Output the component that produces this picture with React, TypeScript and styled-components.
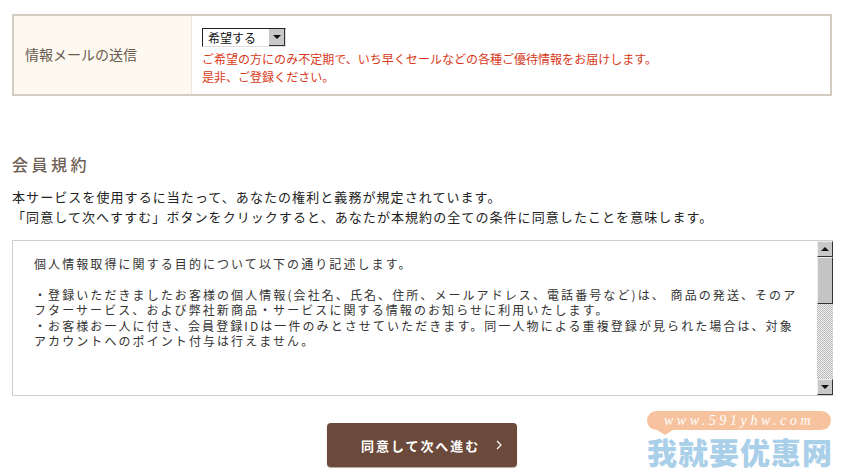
import styled, { createGlobalStyle } from 'styled-components'

const GlobalStyle = createGlobalStyle`
    html, body {
        margin: 0;
        padding: 0;
        background: #fff;
        overflow: hidden;
    }
    body {
        font-family: "Noto Sans CJK JP", "Liberation Sans", sans-serif;
    }
`

const termsLines = [
    '個人情報取得に関する目的について以下の通り記述します。',
    '',
    '・登録いただきましたお客様の個人情報(会社名、氏名、住所、メールアドレス、電話番号など)は、 商品の発送、そのア',
    'フターサービス、および弊社新商品・サービスに関する情報のお知らせに利用いたします。',
    '・お客様お一人に付き、会員登録IDは一件のみとさせていただきます。同一人物による重複登録が見られた場合は、対象',
    'アカウントへのポイント付与は行えません。'
]

const App = () => {
    return (
        <Page>
            <GlobalStyle />
            <FormTable>
                <LabelCell>情報メールの送信</LabelCell>
                <ValueCell>
                    <SelectBox>
                        <SelectText>希望する</SelectText>
                        <SelectArrow>
                            <ArrowUpDown $down />
                        </SelectArrow>
                    </SelectBox>
                    <Notice>
                        ご希望の方にのみ不定期で、いち早くセールなどの各種ご優待情報をお届けします。
                        <br />
                        是非、ご登録ください。
                    </Notice>
                </ValueCell>
            </FormTable>

            <Heading>会員規約</Heading>
            <Lead>
                本サービスを使用するに当たって、あなたの権利と義務が規定されています。
                <br />
                「同意して次へすすむ」ボタンをクリックすると、あなたが本規約の全ての条件に同意したことを意味します。
            </Lead>

            <TermsBox>
                <TermsText>
                    {termsLines.map((line, i) => (
                        <TermsLine key={i}>{line || '\u00a0'}</TermsLine>
                    ))}
                </TermsText>
                <Scrollbar>
                    <ScrollButton>
                        <ArrowUpDown />
                    </ScrollButton>
                    <ScrollThumb />
                    <ScrollTrack />
                    <ScrollButton>
                        <ArrowUpDown $down />
                    </ScrollButton>
                </Scrollbar>
            </TermsBox>

            <ButtonRow>
                <NextButton>
                    同意して次へ進む
                    <Chevron viewBox="0 0 8 10">
                        <path d="M2 1 L6 5 L2 9" fill="none" stroke="#fff" strokeWidth="1.2" />
                    </Chevron>
                </NextButton>
            </ButtonRow>

            <Watermark>
                <WatermarkPill>www.591yhw.com</WatermarkPill>
                <WatermarkName>我就要优惠网</WatermarkName>
            </Watermark>
        </Page>
    )
}

export default App

const Page = styled.div`
    position: relative;
    width: 846px;
    height: 474px;
    padding: 14px 14px 0 12px;
    box-sizing: border-box;
    overflow: hidden;
`
const FormTable = styled.div`
    display: flex;
    height: 82px;
    box-sizing: border-box;
    border: 2px solid #d4cbc2;
`
const LabelCell = styled.div`
    width: 178px;
    flex-shrink: 0;
    box-sizing: border-box;
    padding: 0 0 2px 11px;
    display: flex;
    align-items: center;
    background: #fdf9f1;
    border-right: 1px solid #ece6dc;
    color: #6a5a4f;
    font-size: 14px;
`
const ValueCell = styled.div`
    flex-grow: 1;
    padding: 12px 0 0 10px;
`
const SelectBox = styled.div`
    display: flex;
    width: 84px;
    height: 19px;
    box-sizing: border-box;
    background: #fff;
    border: 1px solid #222;
    border-right-color: #ddd;
    border-bottom-color: #ddd;
`
const SelectText = styled.div`
    flex-grow: 1;
    padding-left: 5px;
    color: #111;
    font-size: 12px;
    line-height: 17px;
`
const SelectArrow = styled.div`
    width: 16px;
    display: flex;
    align-items: center;
    justify-content: center;
    background: #c8c8c8;
    border-right: 1px solid #333;
    border-bottom: 1px solid #333;
    box-sizing: border-box;
`
const ArrowUpDown = styled.span<{ $down?: boolean }>`
    width: 0;
    height: 0;
    border-left: 4px solid transparent;
    border-right: 4px solid transparent;
    border-top: ${p => (p.$down ? '4px solid #111' : 'none')};
    border-bottom: ${p => (p.$down ? 'none' : '4px solid #111')};
`
const Notice = styled.p`
    margin: 3px 0 0;
    color: #d8391a;
    font-size: 12px;
    line-height: 18px;
    letter-spacing: 0.02px;
    white-space: nowrap;
`
const Heading = styled.h2`
    margin: 56px 0 0;
    color: #6f5f55;
    font-size: 16px;
    font-weight: 500;
    line-height: 24px;
    letter-spacing: 3.5px;
`
const Lead = styled.p`
    margin: 11px 0 0;
    color: #222;
    font-size: 13px;
    line-height: 20px;
    letter-spacing: 1.07px;
    white-space: nowrap;
`
const TermsBox = styled.div`
    display: flex;
    height: 156px;
    margin: 13px -1px 0 0;
    box-sizing: border-box;
    border: 1px solid #cfcfcf;
    border-right: none;
`
const TermsText = styled.div`
    flex-grow: 1;
    padding: 15px 0 0 21px;
    overflow: hidden;
`
const TermsLine = styled.div`
    color: #333;
    font-size: 12px;
    line-height: 15.4px;
    letter-spacing: 2.08px;
    white-space: nowrap;
`
const Scrollbar = styled.div`
    width: 16px;
    flex-shrink: 0;
    display: flex;
    flex-direction: column;
`
const ScrollButton = styled.div`
    height: 16px;
    flex-shrink: 0;
    display: flex;
    align-items: center;
    justify-content: center;
    box-sizing: border-box;
    background: #c8c8c8;
    border-right: 1px solid #333;
    border-bottom: 1px solid #333;
    border-top: 1px solid #eee;
    border-left: 1px solid #eee;
`
const ScrollThumb = styled.div`
    height: 47px;
    flex-shrink: 0;
    box-sizing: border-box;
    background: #c4c4c4;
    border-right: 1px solid #333;
    border-bottom: 1px solid #333;
    border-top: 1px solid #eee;
    border-left: 1px solid #eee;
`
const ScrollTrack = styled.div`
    flex-grow: 1;
    background: repeating-conic-gradient(#b8b8b8 0 25%, #f2f2f2 0 50%) 0 0 / 2px 2px;
`
const ButtonRow = styled.div`
    display: flex;
    justify-content: center;
    margin-top: 27px;
`
const NextButton = styled.button`
    width: 190px;
    height: 44px;
    padding: 0 0 0 34px;
    display: flex;
    align-items: center;
    border: none;
    border-radius: 4px;
    background: #6b4a3b;
    box-shadow: 0 1px 1px #b9a69a;
    color: #fff;
    font-family: inherit;
    font-size: 13px;
    font-weight: 700;
    letter-spacing: 1.95px;
`
const Chevron = styled.svg`
    width: 8px;
    height: 10px;
    margin-left: 15px;
`
const Watermark = styled.div`
    position: absolute;
    left: 647px;
    top: 411px;
    width: 184px;
`
const WatermarkPill = styled.div`
    position: relative;
    height: 19px;
    border-radius: 9.5px;
    background: #f6c39e;
    color: #fff;
    font-family: "Liberation Serif", serif;
    font-size: 14px;
    font-style: italic;
    line-height: 19px;
    letter-spacing: 3.6px;
    text-align: center;
    white-space: nowrap;

    &::after {
        content: '';
        position: absolute;
        left: 10px;
        top: 19px;
        border-left: 8px solid transparent;
        border-right: 8px solid transparent;
        border-top: 5px solid #f6c39e;
    }
`
const WatermarkName = styled.div`
    margin-top: 3px;
    color: #a9cfe9;
    font-family: "Noto Sans CJK SC", sans-serif;
    font-size: 30px;
    font-weight: 900;
    line-height: 36px;
    letter-spacing: 1px;
    white-space: nowrap;
`
